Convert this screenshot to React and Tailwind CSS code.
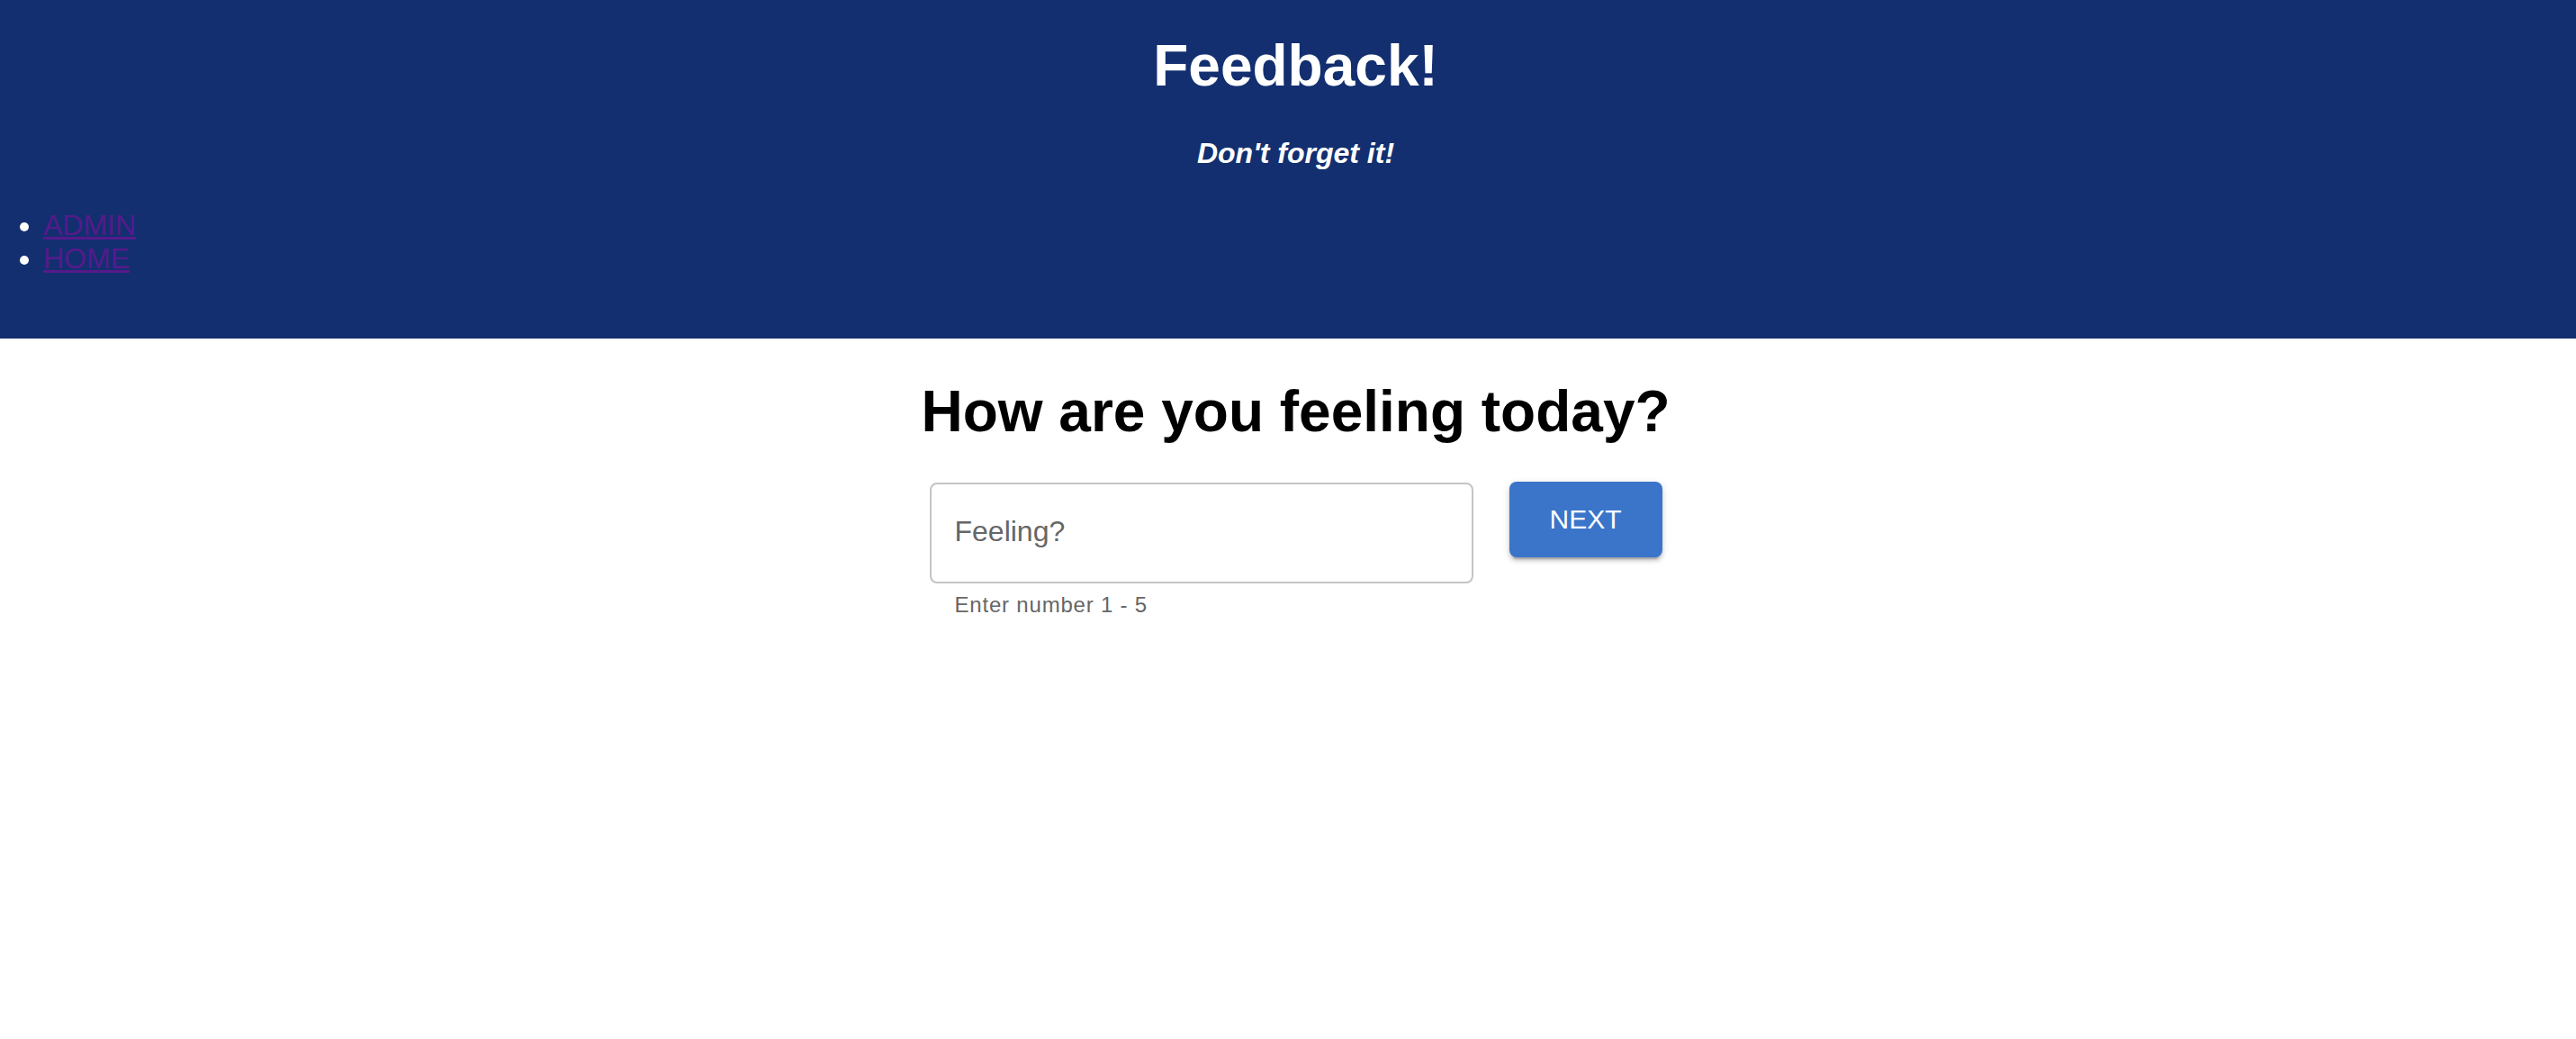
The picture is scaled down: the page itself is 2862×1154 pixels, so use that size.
import React from 'react';

const App = () => {
  return (
    <div className="min-h-screen bg-white text-black" style={{ fontFamily: '"Liberation Sans", Arial, sans-serif' }}>
      {/* Header */}
      <header className="bg-[#132f70] pt-[36px] pb-[70px] text-white">
        <div className="pl-[17px]">
          <h1 className="text-center text-[64px] leading-[74px] font-bold">Feedback!</h1>
          <h4 className="mt-[42px] text-center text-[32px] leading-[37px] font-bold italic">Don't forget it!</h4>
        </div>
        <ul className="mt-[43px] list-disc pl-[48px] text-[32px] leading-[37px]">
          <li>
            <a href="#/admin" className="text-[#551a8b] underline">ADMIN</a>
          </li>
          <li>
            <a href="#/" className="text-[#551a8b] underline">HOME</a>
          </li>
        </ul>
      </header>

      {/* Feeling step */}
      <main className="pt-[44px] pl-[17px]">
        <h1 className="text-center text-[64px] leading-[74px] font-bold">How are you feeling today?</h1>
        <div className="mt-[42px] flex justify-center">
          <div className="flex items-start gap-[40px]">
            <div className="flex flex-col">
              <div className="flex h-[112px] w-[604px] items-center rounded-[8px] border-2 border-[#c4c4c4] pl-[26px] pb-[4px]">
                <span className="text-[32px] leading-[37px] text-[#666666]">Feeling?</span>
              </div>
              <p className="mt-[4px] ml-[28px] text-[24px] leading-[40px] tracking-[0.8px] text-[#666666]">
                Enter number 1 - 5
              </p>
            </div>
            <button className="-mt-[1px] flex h-[84px] w-[170px] items-center justify-center rounded-[8px] bg-[#3a75ca] text-[30px] leading-[34px] text-white shadow-[0_6px_2px_-4px_rgba(0,0,0,0.2),0_4px_4px_0_rgba(0,0,0,0.14),0_2px_10px_0_rgba(0,0,0,0.12)]">
              NEXT
            </button>
          </div>
        </div>
      </main>
    </div>
  );
};

export default App;
